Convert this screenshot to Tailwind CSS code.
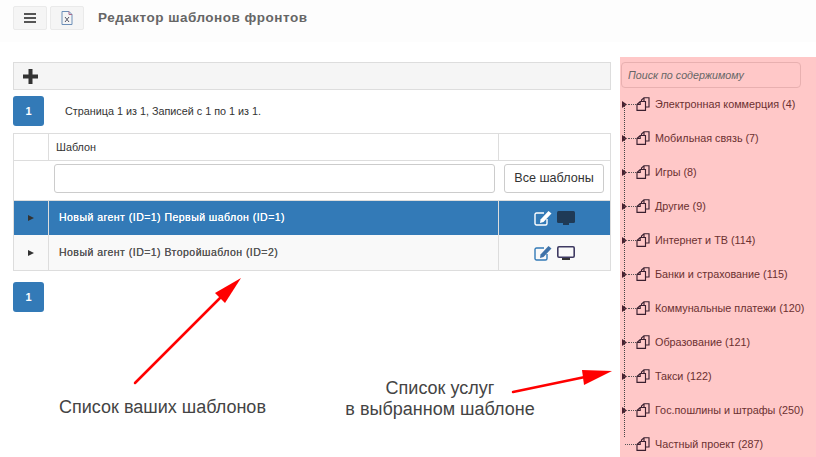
<!DOCTYPE html>
<html lang="ru">
<head>
  <meta charset="UTF-8">
  <title>Редактор шаблонов фронтов</title>
  <script src="https://cdn.jsdelivr.net/npm/@tailwindcss/browser@4"></script>
</head>
<body class="bg-white font-['Liberation_Sans',Arial,sans-serif] text-[#333]">
<div class="relative w-[816px] h-[457px] overflow-hidden">
  <!-- top bar -->
  <div class="h-[42px] bg-[#fdfdfd] pl-[13px] pt-[6px] flex items-start">
    <button class="w-[34px] h-[24px] bg-[#f5f5f5] border border-[#eaeaea] rounded-[2px] flex items-center justify-center">
      <svg width="12" height="10" viewBox="0 0 12 10"><path d="M0 1h12M0 5h12M0 9h12" stroke="#555" stroke-width="1.800"/></svg>
    </button>
    <button class="w-[34px] h-[24px] ml-[3px] bg-[#f5f5f5] border border-[#eaeaea] rounded-[2px] flex items-center justify-center">
      <svg width="12" height="14" viewBox="0 0 12 14" fill="none"><path d="M1 .5h7l3 3v10H1z" stroke="#6d8fb8"/><path d="M8 .5v3h3" stroke="#a86a8c"/><path d="M4 6l4 5M8 6l-4 5" stroke="#556"/></svg>
    </button>
    <h1 class="ml-[14px] mt-[5px] text-[13.500px] leading-[14px] font-bold text-[#666] tracking-[0.5px]">Редактор шаблонов фронтов</h1>
  </div>

  <div class="flex">
    <!-- main column -->
    <div class="w-[598px] ml-[13px] pt-[20px]">
      <div class="h-[28px] bg-[#f5f5f5] border border-[#ddd] flex items-center pl-[9px]">
        <svg width="15" height="15" viewBox="0 0 15 15"><path d="M5.500 0h4v5.500H15v4H9.500V15h-4V9.500H0v-4h5.500z" fill="#333"/></svg>
      </div>
      <div class="flex items-center mt-[6px] h-[30px]">
        <div class="w-[31px] h-[30px] bg-[#337ab7] rounded-[3px] text-white text-[11px] font-bold flex items-center justify-center">1</div>
        <span class="ml-[21px] text-[10.800px] text-[#333]">Страница 1 из 1, Записей с 1 по 1 из 1.</span>
      </div>

      <!-- table -->
      <div class="mt-[7px] border border-[#ddd]">
        <div class="grid grid-cols-[35px_450px_111px] h-[27px] border-b border-[#ddd] text-[10.800px]">
          <div class="border-r border-[#ddd]"></div>
          <div class="border-r border-[#ddd] pl-[7px] pt-[1px] flex items-center">Шаблон</div>
          <div></div>
        </div>
        <div class="grid grid-cols-[35px_450px_111px] h-[40px] border-b border-[#ddd]">
          <div></div>
          <div class="pl-[5px] pt-[3px]"><input class="w-[441px] h-[29px] bg-white border border-[#ccc] rounded-[3px]"></div>
          <div class="pl-[5px] pt-[3px]">
            <button class="w-[100px] h-[29px] bg-white border border-[#ccc] rounded-[3px] text-[12.600px] text-[#333]">Все шаблоны</button>
          </div>
        </div>
        <div class="grid grid-cols-[35px_450px_111px] h-[34px] bg-[#337ab7] text-white text-[10.500px] [text-shadow:0_0_0.5px_currentColor]">
          <div class="border-r border-[#ddd] flex items-center justify-center">
            <svg width="6" height="6" viewBox="0 0 6 6"><path d="M0 0l6 3-6 3z" fill="#333"/></svg>
          </div>
          <div class="border-r border-[#ddd] pl-[10px] flex items-center tracking-[0.47px]">Новый агент (ID=1) Первый шаблон (ID=1)</div>
          <div class="flex items-center justify-center gap-[5px]">
            <svg width="18" height="16" viewBox="0 0 18 16" fill="none"><path d="M13 9v4.500a1.500 1.500 0 0 1-1.500 1.500h-9A1.500 1.500 0 0 1 1 13.500v-9A1.500 1.500 0 0 1 2.500 3H10" stroke="#fff" stroke-width="1.400"/><path d="M6.500 9.500l8-8.500 3 2.500-8 8.500-3.500 1z" fill="#fff"/></svg>
            <svg width="18" height="16" viewBox="0 0 18 16"><rect y="1" width="18" height="12" rx="1.500" fill="#1f3a56"/><rect x="6" y="13" width="6" height="2" fill="#1f3a56"/></svg>
          </div>
        </div>
        <div class="grid grid-cols-[35px_450px_111px] h-[35px] bg-[#f9f9f9] text-[10.500px] text-[#555] [text-shadow:0_0_0.5px_currentColor]">
          <div class="border-r border-[#ddd] flex items-center justify-center">
            <svg width="6" height="6" viewBox="0 0 6 6"><path d="M0 0l6 3-6 3z" fill="#333"/></svg>
          </div>
          <div class="border-r border-[#ddd] pl-[10px] flex items-center tracking-[0.47px]">Новый агент (ID=1) Второйшаблон (ID=2)</div>
          <div class="flex items-center justify-center gap-[5px]">
            <svg width="18" height="16" viewBox="0 0 18 16" fill="none"><path d="M13 9v4.500a1.500 1.500 0 0 1-1.500 1.500h-9A1.500 1.500 0 0 1 1 13.500v-9A1.500 1.500 0 0 1 2.500 3H10" stroke="#337ab7" stroke-width="1.400"/><path d="M6.500 9.500l8-8.500 3 2.500-8 8.500-3.500 1z" fill="#3f72a8"/></svg>
            <svg width="18" height="16" viewBox="0 0 18 16" fill="none"><rect x=".8" y="1.800" width="16.400" height="10.400" rx="1.200" stroke="#3f3a62" stroke-width="1.600"/><rect x="5" y="13" width="8" height="2" fill="#333"/></svg>
          </div>
        </div>
      </div>

      <div class="mt-[11px] w-[31px] h-[30px] bg-[#337ab7] rounded-[3px] text-white text-[11px] font-bold flex items-center justify-center">1</div>
    </div>

    <!-- services tree -->
    <aside class="relative ml-[9px] mt-[15px] w-[196px] h-[400px] bg-[#ffc8c8] pl-[1px] pt-[5px]">
      <input class="w-[180px] h-[26px] bg-transparent border border-[#e8b0b0] rounded-[4px] px-[6px] text-[10.700px] italic text-[#666] placeholder:text-[#666]" placeholder="Поиск по содержимому">
      <div class="absolute left-[4px] top-[47px] h-[333px] border-l border-dotted border-[#444]"></div>
      <ul id="tree" class="mt-[-1px] ml-[1px] text-[10.800px] text-[#6b3030]"></ul>
    </aside>
  </div>

  <!-- annotations drawn over the page -->
  <svg class="absolute left-0 top-0 pointer-events-none" width="816" height="457" viewBox="0 0 816 457">
    <path d="M135 383L222 296" stroke="#f00" stroke-width="2.500" stroke-linecap="round"/>
    <path d="M241 278l-26 15 10 10z" fill="#f00"/>
    <path d="M513 392L585 377" stroke="#f00" stroke-width="2.500" stroke-linecap="round"/>
    <path d="M612 371l-30-1 2 15z" fill="#f00"/>
  </svg>
  <p class="absolute left-[59px] top-[397px] text-[18px] leading-[21px] text-[#444]">Список ваших шаблонов</p>
  <p class="absolute left-[340px] top-[378px] w-[200px] text-center text-[18px] leading-[21px] text-[#444]">Список услуг<br>в выбранном шаблоне</p>
</div>

<script>
  const services = [
    "Электронная коммерция (4)", "Мобильная связь (7)", "Игры (8)", "Другие (9)",
    "Интернет и ТВ (114)", "Банки и страхование (115)", "Коммунальные платежи (120)",
    "Образование (121)", "Такси (122)", "Гос.пошлины и штрафы (250)", "Частный проект (287)"
  ];
  const arrow = '<svg width="6" height="7" viewBox="0 0 6 7"><path d="M0 0l5 3.500-5 3.500z" fill="#4a2030"/></svg><span class="w-[8px] border-t border-dotted border-[#555]"></span>';
  const noArrow = '<span class="w-[3px]"></span><span class="w-[11px] border-t border-dotted border-[#555]"></span>';
  const copy = '<svg class="mr-[5px]" width="14" height="14" viewBox="0 0 14 14" fill="none" stroke="#3a2030" stroke-width="1.150"><path d="M5.500 4.500V3L8 .7H13V10H9.500M1 7.500L4.200 4.500H9.500V13.300H1zM4.200 4.500V7.500H1M8 .7V4.500"/></svg>';
  document.getElementById("tree").innerHTML = services.map((name, i) =>
    `<li class="flex items-center h-[34px]">${i < 10 ? arrow : noArrow}${copy}${name}</li>`
  ).join("");
</script>
</body>
</html>
